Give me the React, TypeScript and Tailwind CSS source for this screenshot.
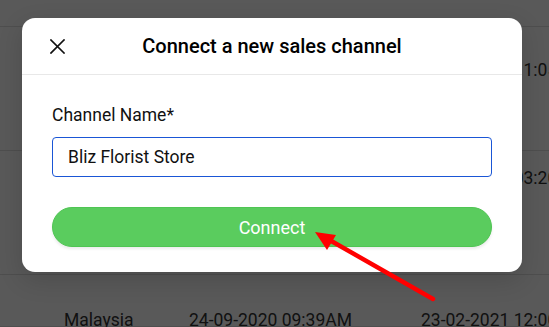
const rows = [
  { h: 'h-[124px]', pt: 'pt-[31px]', country: 'Singapore', created: '24-09-2020 09:12AM', updated: '23-02-2021 11:05AM' },
  { h: 'h-[124px]', pt: 'pt-[15px]', country: 'Malaysia', created: '24-09-2020 09:20AM', updated: '23-02-2021 03:20PM' },
  { h: 'h-[52px]', pt: 'pt-[33px]', country: 'Malaysia', created: '24-09-2020 09:39AM', updated: '23-02-2021 12:00PM' },
];

function CloseIcon() {
  return (
    <svg width="15" height="15" viewBox="0 0 15 15" className="text-[#111]">
      <path d="M1 1L14 14M14 1L1 14" stroke="currentColor" strokeWidth="1.7" strokeLinecap="square" />
    </svg>
  );
}

function ArrowMark() {
  return (
    <svg className="absolute inset-0 pointer-events-none" width="549" height="327" viewBox="0 0 549 327">
      <line x1="433" y1="299" x2="326" y2="238" stroke="#ff0000" strokeWidth="4.5" strokeLinecap="round" />
      <polygon points="315,232 336,235 327,250" fill="#ff0000" />
    </svg>
  );
}

export default function App() {
  return (
    <div className="relative w-[549px] h-[327px] overflow-hidden bg-white font-['Roboto','Liberation_Sans',sans-serif]">
      {/* table behind the dialog */}
      <div className="flex flex-col">
        <div className="h-[27px] border-b border-[#e0e0e0]" />
        {rows.map((r, i) => (
          <div key={i} className={`${r.h} ${r.pt} flex border-b border-[#e0e0e0] text-[17.5px] leading-6 text-[#333] whitespace-nowrap`}>
            <span className="w-[189px] shrink-0 pl-[64px]">{r.country}</span>
            <span className="w-[232px] shrink-0">{r.created}</span>
            <span className="shrink-0">{r.updated}</span>
          </div>
        ))}
      </div>

      {/* overlay + dialog */}
      <div className="absolute inset-0 bg-black/65 pl-[22px] pt-[18px]">
        <div className="w-[500px] bg-white rounded-[13px] shadow-[0_8px_24px_rgba(0,0,0,0.15)]">
          <div className="h-[57px] grid grid-cols-[1fr_auto_1fr] items-center border-b border-[#e8e8e8]">
            <div className="pl-[28px] flex">
              <CloseIcon />
            </div>
            <h2 className="text-[20px] font-medium text-black">Connect a new sales channel</h2>
            <div />
          </div>
          <div className="px-[30px] pt-[28px] pb-[25px]">
            <label className="block text-[17.5px] leading-6 text-[#111]">Channel Name*</label>
            <div className="mt-[10px] h-[40px] flex items-center px-[15px] border border-[#1a56d6] rounded-[4px] text-[17.5px] text-[#111]">
              Bliz Florist Store
            </div>
            <button className="mt-[30px] w-full h-[40px] rounded-full bg-[#5acc5e] border border-[#4fc553] text-white text-[18px] shadow-[0_2px_3px_rgba(0,0,0,0.08)]">
              Connect
            </button>
          </div>
        </div>
      </div>

      <ArrowMark />
    </div>
  );
}
